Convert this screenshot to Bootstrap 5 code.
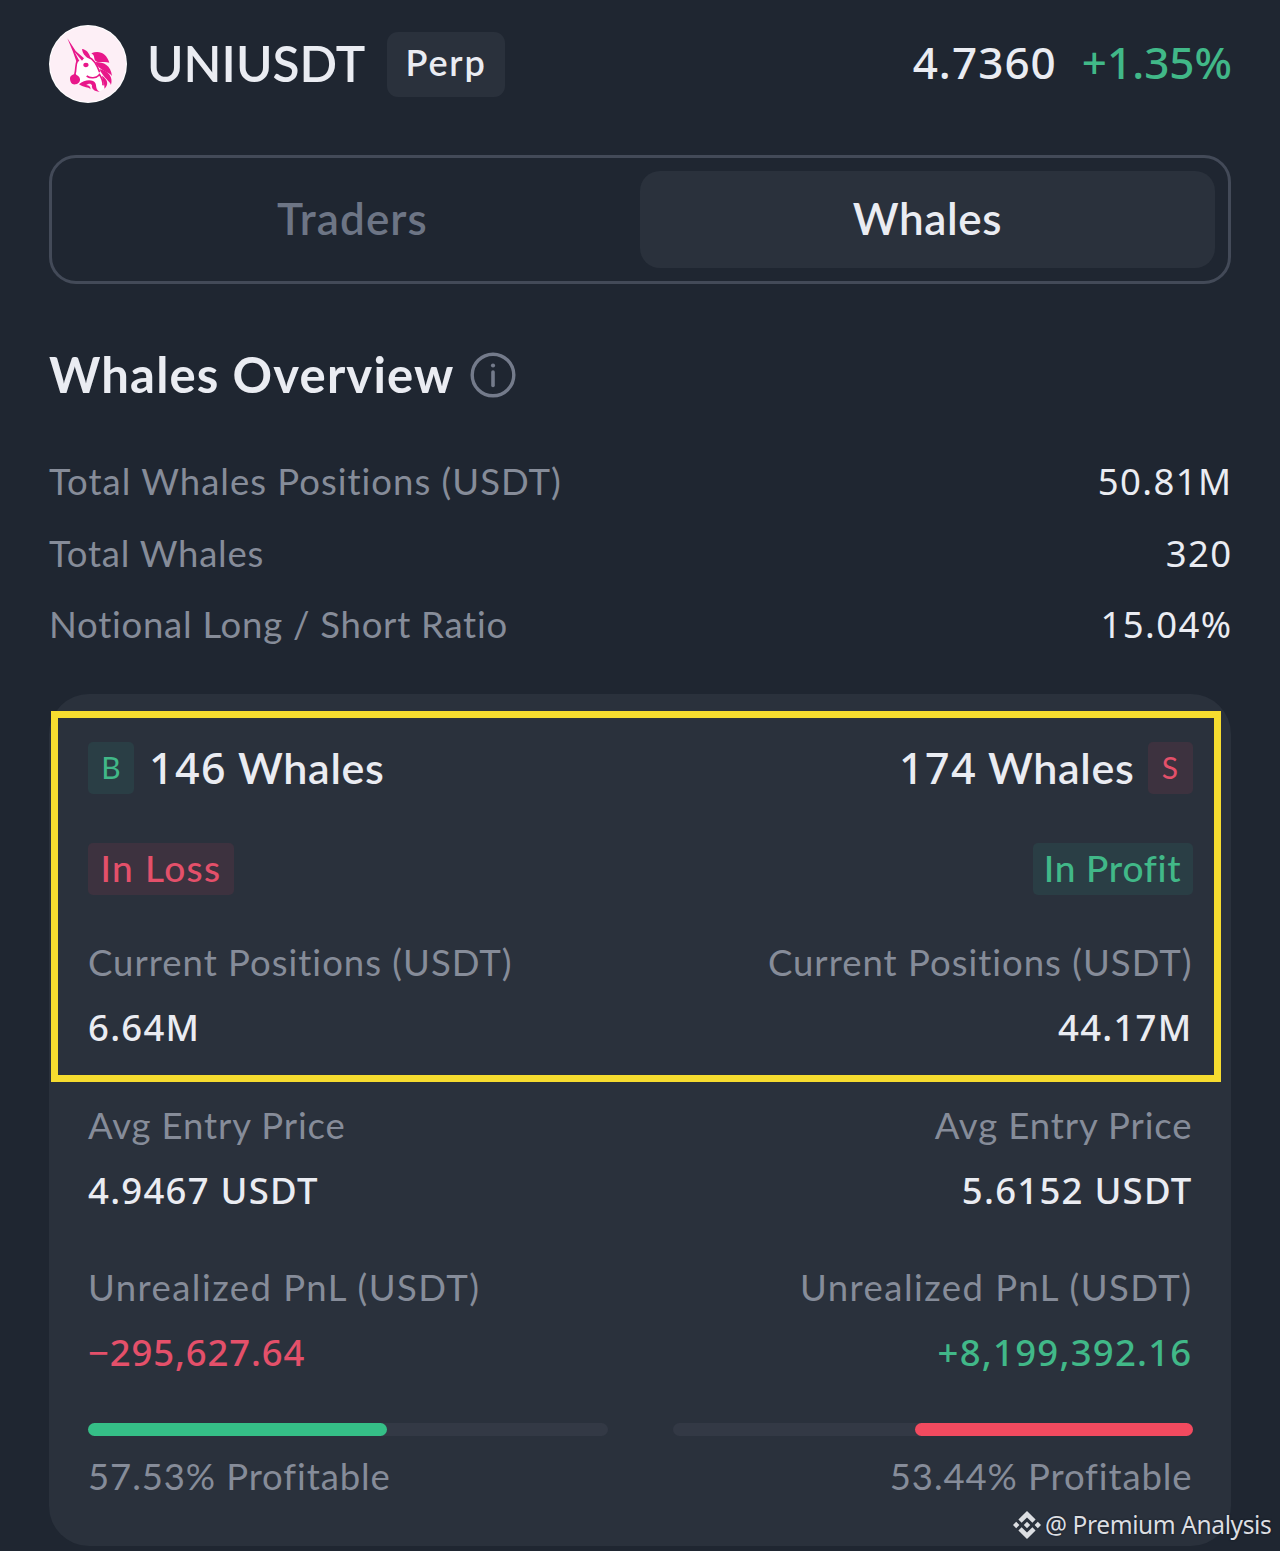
<!DOCTYPE html>
<html lang="en">
<head>
<meta charset="utf-8">
<meta name="viewport" content="width=device-width, initial-scale=1">
<title>UNIUSDT Whales Overview</title>
<link rel="stylesheet" href="https://cdn.jsdelivr.net/npm/bootstrap@5.3.0/dist/css/bootstrap.min.css">
<style>
  :root { --ink:#eaecf2; --muted:#868c99; --up:#41b888; --down:#e4506a; --panel:#2a313c; }
  body { background:#1f2631; color:var(--ink); font-family:Lato,"Liberation Sans",sans-serif; overflow:hidden; }
  .screen { width:1280px; height:1551px; padding:0 49px; overflow:hidden; }
  .figs { font-family:"Noto Sans","Liberation Sans",sans-serif; }
  .up { color:var(--up); } .down { color:var(--down); }

  .topbar { padding-top:25px; height:103px; }
  .coin { width:78px; height:78px; margin-right:20px; }
  .pair { font-size:49.5px; font-weight:600; line-height:60px; margin:0 21px 2px 0; width:219px; white-space:nowrap; }
  .perp { width:118px; height:65px; background:var(--panel); border-radius:11px; font-size:36px; font-weight:600; line-height:61px; text-align:center; letter-spacing:1.8px; }
  .price { font-size:44px; font-weight:500; line-height:60px; padding-bottom:4px; letter-spacing:1.07px; }
  .change { font-size:44px; font-weight:500; line-height:60px; padding-bottom:4px; letter-spacing:0; margin:0 -1px 0 25px; }

  .switch { margin-top:52px; height:129px; border:3px solid #434a58; border-radius:27px; padding:13px; }
  .switch .tab { flex:1 1 0; border-radius:20px; font-size:44px; line-height:95px; text-align:center; font-weight:600; letter-spacing:.6px; }
  .switch .tab-off { color:#6d7585; letter-spacing:1.1px; }
  .switch .tab-on { background:var(--panel); }

  .title { margin-top:61px; height:60px; }
  .title h1 { font-size:49px; font-weight:700; line-height:59px; letter-spacing:1.17px; margin:0 15px 0 0; }

  .stats { margin-top:56px; }
  .stat { height:71.5px; line-height:40px; font-size:36.5px; }
  .stat .name, .label { color:var(--muted); }
  .stat .figs { font-size:36.5px; letter-spacing:1.4px; margin-right:-1.5px; }
  .ls-a { letter-spacing:1px; } .ls-b { letter-spacing:.75px; } .ls-c { letter-spacing:1.45px; } .ls-d { letter-spacing:.9px; }

  .panel { margin-top:18px; height:852px; background:var(--panel); border-radius:40px; padding:48px 38.5px 0 39px; position:relative; }
  .mark-box { position:absolute; left:2px; top:17px; width:1170px; height:371px; border:7px solid #f6dc2f; }
  .side { width:46px; height:52px; border-radius:5px; font-size:30px; line-height:50px; text-align:center; }
  .side-s { width:45px; }
  .tint-up { background:#2a3e45; color:var(--up); }
  .tint-down { background:#3d323f; color:var(--down); }
  .count { font-size:43px; font-weight:600; line-height:51px; letter-spacing:.7px; margin-left:15px; }
  .count-r { margin:0 13px 0 0; }
  .count .figs { font-weight:500; letter-spacing:1.4px; }
  .state { margin-top:49px; }
  .state span { height:52px; border-radius:5px; font-size:37px; line-height:49px; font-weight:500; text-align:center; }
  .state .loss { width:146px; letter-spacing:1.4px; } .state .profit { width:160px; letter-spacing:.7px; }
  .label { font-size:36.5px; line-height:40px; }
  .value { font-size:36.5px; line-height:40px; font-weight:500; letter-spacing:1.25px; font-family:"Noto Sans","Liberation Sans",sans-serif; }
  .loss-value { letter-spacing:.85px; }
  .g-a { margin-top:47px; } .g-v { margin-top:25px; } .g-b { margin-top:58px; } .g-c { margin-top:57px; } .g-d { margin-top:20px; }
  .bars { margin-top:51px; }
  .meter { width:520px; height:13px; background:#333945; border-radius:7px; }
  .meter div { height:13px; border-radius:7px; }
  .fill-up { background:#35bf87; } .fill-down { background:#f24a5f; }
  .credit { position:absolute; left:1013px; top:1508px; height:34px; font:400 24.5px/34px "Noto Sans",sans-serif; color:#dcdee2; letter-spacing:-.4px; white-space:nowrap; text-shadow:0 0 2px #11161e; }
</style>
<script src="https://cdn.jsdelivr.net/npm/bootstrap@5.3.0/dist/js/bootstrap.bundle.min.js"></script>
</head>
<body>
<main class="screen position-relative">
  <header class="topbar d-flex align-items-center">
    <svg class="coin flex-shrink-0" viewBox="27 30 234 234" aria-hidden="true">
      <circle cx="144" cy="147" r="117" fill="#fff"/>
      <circle cx="144" cy="147" r="114" fill="#fdeff6"/>
      <path d="M118 138 C106 150 109 165 98 186 L115 207 C140 196 160 196 178 229 C200 222 207 200 200 175 L160 120Z" fill="#fff"/>
      <g fill="#e8178a">
        <path d="M82 70 L107 108 L132 130 L126 137 L104 111 L118 138 L110 142 L98 108 Z"/>
        <path d="M126 102 C139 104 148 113 152 131 L143 129 C136 123 128 117 126 102Z"/>
        <path d="M154 115 C178 104 200 116 208 143 C192 137 177 146 166 137 C160 130 166 122 154 115Z"/>
        <path d="M166 141 C192 141 212 150 216 183 C205 168 178 170 166 141Z"/>
        <path d="M178 162 C206 168 220 186 213 210 C210 198 193 193 178 162Z"/>
        <path d="M186 182 C204 194 207 209 193 221 C195 206 187 198 186 182Z"/>
        <path d="M107 176 C101 178 92 179 90 189 C90 202 96 210 107 208 C119 206 123 196 118 187 C115 181 110 182 107 176Z"/>
        <ellipse cx="138" cy="150" rx="8" ry="6.500"/>
        <path d="M117 208 C134 193 160 192 167 206 C170 216 166 222 179 231 C162 229 154 221 156 211 C153 203 143 206 139 210 C148 211 153 217 151 223 C144 214 134 220 117 208Z"/>
      </g>
      <path d="M112 138 C105 150 110 162 104 180 M146 127 C160 132 171 150 179 172 M140 183 C151 191 168 190 178 180 M177 176 C184 186 190 198 189 211" fill="none" stroke="#e8178a" stroke-width="5"/>
    </svg>
    <div class="pair">UNIUSDT</div>
    <div class="perp">Perp</div>
    <div class="price figs ms-auto">4.7360</div>
    <div class="change figs up">+1.35%</div>
  </header>

  <nav class="switch d-flex">
    <div class="tab tab-off">Traders</div>
    <div class="tab tab-on">Whales</div>
  </nav>

  <div class="title d-flex align-items-start">
    <h1>Whales Overview</h1>
    <svg class="mt-1" width="46" height="50" viewBox="0 0 46 50" fill="none" stroke="#747b8b" aria-hidden="true">
      <circle cx="23" cy="26" r="20.800" stroke-width="3.400"/>
      <path d="M23 23V36.500" stroke-width="3.600" stroke-linecap="round"/>
      <circle cx="23" cy="16.500" r="2.100" fill="#747b8b" stroke="none"/>
    </svg>
  </div>

  <section class="stats">
    <div class="stat d-flex justify-content-between"><span class="name ls-a">Total Whales Positions (USDT)</span><span class="figs">50.81M</span></div>
    <div class="stat d-flex justify-content-between"><span class="name ls-b">Total Whales</span><span class="figs">320</span></div>
    <div class="stat d-flex justify-content-between"><span class="name ls-b">Notional Long / Short Ratio</span><span class="figs">15.04%</span></div>
  </section>

  <section class="panel">
    <div class="d-flex justify-content-between">
      <div class="d-flex"><span class="side tint-up">B</span><span class="count"><span class="figs">146</span> Whales</span></div>
      <div class="d-flex"><span class="count count-r"><span class="figs">174</span> Whales</span><span class="side side-s tint-down">S</span></div>
    </div>
    <div class="state d-flex justify-content-between">
      <span class="loss tint-down">In Loss</span>
      <span class="profit tint-up">In Profit</span>
    </div>
    <div class="label ls-a g-a d-flex justify-content-between"><span>Current Positions (USDT)</span><span>Current Positions (USDT)</span></div>
    <div class="value g-v d-flex justify-content-between"><span>6.64M</span><span>44.17M</span></div>
    <div class="label ls-d g-b d-flex justify-content-between"><span>Avg Entry Price</span><span>Avg Entry Price</span></div>
    <div class="value g-v d-flex justify-content-between"><span>4.9467 USDT</span><span>5.6152 USDT</span></div>
    <div class="label ls-c g-c d-flex justify-content-between"><span>Unrealized PnL (USDT)</span><span>Unrealized PnL (USDT)</span></div>
    <div class="value g-v d-flex justify-content-between"><span class="down loss-value">−295,627.64</span><span class="up">+8,199,392.16</span></div>
    <div class="bars d-flex justify-content-between">
      <div class="meter"><div class="fill-up" style="width:57.53%"></div></div>
      <div class="meter"><div class="fill-down ms-auto" style="width:53.44%"></div></div>
    </div>
    <div class="label ls-d g-d d-flex justify-content-between"><span>57.53% Profitable</span><span>53.44% Profitable</span></div>
    <div class="mark-box"></div>
  </section>

  <div class="credit d-flex align-items-center">
    <svg class="me-1" width="28" height="28" viewBox="0 0 28 28" fill="#dcdee2" aria-hidden="true">
      <path d="M14 0l8.600 8.600-3.200 3.200L14 6.400l-5.400 5.400-3.200-3.200zM14 28l-8.600-8.600 3.200-3.200L14 21.600l5.400-5.400 3.200 3.200zM3.200 10.800L6.400 14l-3.200 3.200L0 14zM24.800 10.800L28 14l-3.200 3.200L21.600 14zM14 10.800l3.200 3.200-3.200 3.200-3.200-3.200z"/>
    </svg>
    <span>@ Premium Analysis</span>
  </div>
</main>
</body>
</html>
